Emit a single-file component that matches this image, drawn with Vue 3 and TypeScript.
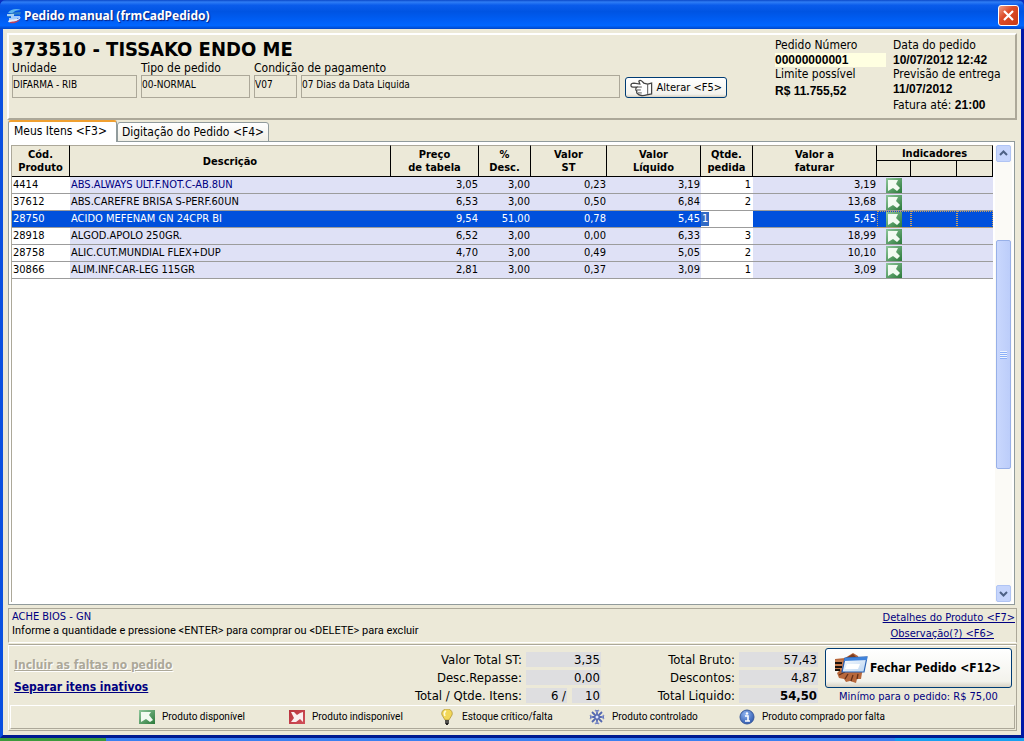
<script setup lang="ts">
import { ref } from 'vue'

interface Item {
  code: string
  name: string
  price: string
  discount: string
  st: string
  net: string
  qty: string
  total: string
  highlight?: boolean
}

const items: Item[] = [
  { code: '4414', name: 'ABS.ALWAYS ULT.F.NOT.C-AB.8UN', price: '3,05', discount: '3,00', st: '0,23', net: '3,19', qty: '1', total: '3,19', highlight: true },
  { code: '37612', name: 'ABS.CAREFRE BRISA S-PERF.60UN', price: '6,53', discount: '3,00', st: '0,50', net: '6,84', qty: '2', total: '13,68' },
  { code: '28750', name: 'ACIDO MEFENAM GN 24CPR BI', price: '9,54', discount: '51,00', st: '0,78', net: '5,45', qty: '1', total: '5,45' },
  { code: '28918', name: 'ALGOD.APOLO 250GR.', price: '6,52', discount: '3,00', st: '0,00', net: '6,33', qty: '3', total: '18,99' },
  { code: '28758', name: 'ALIC.CUT.MUNDIAL FLEX+DUP', price: '4,70', discount: '3,00', st: '0,49', net: '5,05', qty: '2', total: '10,10' },
  { code: '30866', name: 'ALIM.INF.CAR-LEG 115GR', price: '2,81', discount: '3,00', st: '0,37', net: '3,09', qty: '1', total: '3,09' },
]

const selected = ref(2)
const editedQty = ref('1')
</script>

<template>
  <div class="screen">
    <svg class="defs" width="0" height="0" aria-hidden="true">
      <defs>
        <linearGradient id="g-green" x1="0" y1="0" x2="1" y2="1">
          <stop offset="0" stop-color="#8fc79c" />
          <stop offset="1" stop-color="#2b7a3a" />
        </linearGradient>
        <linearGradient id="g-red" x1="0" y1="0" x2="1" y2="1">
          <stop offset="0" stop-color="#b8323c" />
          <stop offset="1" stop-color="#d0505a" />
        </linearGradient>
        <linearGradient id="g-card" x1="0" y1="0" x2="1" y2="1">
          <stop offset="0" stop-color="#ffffff" />
          <stop offset="1" stop-color="#b9d4f2" />
        </linearGradient>
        <radialGradient id="g-info" cx="0.4" cy="0.3" r="0.8">
          <stop offset="0" stop-color="#8fb4f0" />
          <stop offset="1" stop-color="#2450a8" />
        </radialGradient>
      </defs>
    </svg>

    <main class="window">
      <header class="titlebar">
        <svg class="app-icon" viewBox="0 0 16 16" aria-hidden="true">
          <path d="M2 5C4 1 11 0 15 2C11 2 8 3 7 5Z" fill="#5db4ee" />
          <path d="M1 9C2 5 8 4 15 4L14 7C10 6 7 7 6 9Z" fill="#2e7fc6" />
          <path d="M1 7H8M5 9H14M3 11H11" stroke="#d5efff" stroke-width="1.3" />
          <path d="M2 14C7 15 13 13 15 9C11 12 7 11 3 12Z" fill="#e8eef8" />
          <path d="M4 15C8 16 13 14 14 11C11 14 8 13 4 14Z" fill="#c0425a" />
        </svg>
        <h1>Pedido manual (frmCadPedido)</h1>
        <button class="close" type="button" aria-label="Fechar">
          <svg viewBox="0 0 19 19"><path d="M5 5L14 14M14 5L5 14" stroke="#fff" stroke-width="2.2" /></svg>
        </button>
      </header>

      <div class="client">
        <section class="order">
          <div class="customer">
            <h2>373510 - TISSAKO ENDO ME</h2>
            <div class="fields">
              <label class="unit">Unidade<input value="DIFARMA - RIB" readonly /></label>
              <label class="kind">Tipo de pedido<input value="00-NORMAL" readonly /></label>
              <div class="payment">
                <label for="pay-code">Condição de pagamento</label>
                <div class="pair">
                  <input id="pay-code" class="pay-code" value="V07" readonly />
                  <input value="07 Dias da Data Liquida" aria-label="Descrição da condição" readonly />
                </div>
              </div>
              <button class="xp alter" type="button">
                <svg viewBox="0 0 23 18" aria-hidden="true">
                  <path d="M1 6C1 4 3 4 4 4L10 5L9 2C11 0 13 3 14 4L18 5L22 4V15L17 16C14 17 9 17 8 15C6 14 7 12 7 12C5 11 6 9 7 8L3 8C1 8 1 7 1 6Z" fill="#fff" stroke="#444" stroke-width="1.3" />
                  <path d="M7 8H12M7 11H11M8 14H12M18 5V15" fill="none" stroke="#555" />
                </svg>
                <span>Alterar &lt;F5&gt;</span>
              </button>
            </div>
          </div>
          <dl class="number">
            <dt>Pedido Número</dt>
            <dd class="cream">00000000001</dd>
            <dt>Limite possível</dt>
            <dd class="low">R$ 11.755,52</dd>
          </dl>
          <dl class="dates">
            <dt>Data do pedido</dt>
            <dd>10/07/2012 12:42</dd>
            <dt>Previsão de entrega</dt>
            <dd>11/07/2012</dd>
            <dt class="until">Fatura até: <b>21:00</b></dt>
          </dl>
        </section>

        <nav class="tabs" role="tablist">
          <button class="tab active" type="button" role="tab" aria-selected="true">Meus Itens &lt;F3&gt;</button>
          <button class="tab" type="button" role="tab" aria-selected="false">Digitação do Pedido &lt;F4&gt;</button>
        </nav>

        <section class="page">
          <div class="grid-area">
            <table>
              <colgroup>
                <col class="c-code" /><col /><col class="c-price" /><col class="c-disc" /><col class="c-st" />
                <col class="c-net" /><col class="c-qty" /><col class="c-total" /><col class="c-i1" /><col class="c-i2" /><col class="c-i3" />
              </colgroup>
              <thead>
                <tr>
                  <th rowspan="2">Cód.<br />Produto</th>
                  <th rowspan="2">Descrição</th>
                  <th rowspan="2">Preço<br />de tabela</th>
                  <th rowspan="2">%<br />Desc.</th>
                  <th rowspan="2">Valor<br />ST</th>
                  <th rowspan="2">Valor<br />Líquido</th>
                  <th rowspan="2">Qtde.<br />pedida</th>
                  <th rowspan="2">Valor a<br />faturar</th>
                  <th colspan="3" class="group">Indicadores</th>
                </tr>
                <tr class="sub"><th></th><th></th><th></th></tr>
              </thead>
              <tbody>
                <tr v-for="(item, i) in items" :key="item.code" :class="{ selected: i === selected, highlight: item.highlight }" @click="selected = i">
                  <td class="white">{{ item.code }}</td>
                  <td class="name">{{ item.name }}</td>
                  <td class="num">{{ item.price }}</td>
                  <td class="num">{{ item.discount }}</td>
                  <td class="num">{{ item.st }}</td>
                  <td class="num">{{ item.net }}</td>
                  <td v-if="i === selected" class="edit"><input v-model="editedQty" aria-label="Quantidade pedida" /></td>
                  <td v-else class="num white qty">{{ item.qty }}</td>
                  <td class="num">{{ item.total }}</td>
                  <td class="ind">
                    <svg class="status" viewBox="0 0 16 15" aria-label="Produto disponível">
                      <rect width="16" height="15" fill="url(#g-green)" />
                      <path d="M2 2H12L10 6L14 10L11 13L7 10L2 13Z" fill="#f2fbf2" />
                    </svg>
                  </td>
                  <td class="ind"></td>
                  <td class="ind"></td>
                </tr>
              </tbody>
            </table>
          </div>
          <div class="scrollbar">
            <button type="button" aria-label="Rolar para cima"><svg viewBox="0 0 13 15"><path d="M3 9L6.500 5.500L10 9" /></svg></button>
            <div class="track">
              <i class="before"></i>
              <div class="thumb"><span></span></div>
              <i class="after"></i>
            </div>
            <button type="button" aria-label="Rolar para baixo"><svg viewBox="0 0 13 15"><path d="M3 6L6.500 9.500L10 6" /></svg></button>
          </div>
        </section>

        <section class="info">
          <div>
            <p class="maker">ACHE BIOS - GN</p>
            <p class="hint">Informe a quantidade e pressione &lt;ENTER&gt; para comprar ou &lt;DELETE&gt; para excluir</p>
          </div>
          <div class="info-links">
            <a href="#">Detalhes do Produto &lt;F7&gt;</a>
            <a href="#" class="obs">Observação(?) &lt;F6&gt;</a>
          </div>
        </section>

        <footer class="bottom">
          <div class="summary">
            <div class="actions">
              <a href="#" class="disabled" aria-disabled="true">Incluir as faltas no pedido</a>
              <a href="#">Separar itens inativos</a>
            </div>
            <dl class="totals left">
              <dt>Valor Total ST:</dt><dd>3,35</dd>
              <dt>Desc.Repasse:</dt><dd>0,00</dd>
              <dt>Total / Qtde. Itens:</dt><dd class="split"><span class="count">6 /</span><span>10</span></dd>
            </dl>
            <dl class="totals right">
              <dt>Total Bruto:</dt><dd>57,43</dd>
              <dt>Descontos:</dt><dd>4,87</dd>
              <dt>Total Liquido:</dt><dd class="strong">54,50</dd>
            </dl>
            <div class="finish">
              <button class="xp" type="button">
                <svg viewBox="0 0 34 32" aria-hidden="true">
                  <path d="M1 7L11 6L19 1L24 4L25 8L22 18L30 17L28 21L27 27L23 27L22 31L16 29L12 30L10 27L5 26L3 21L6 18L1 18Z" fill="#b8683c" />
                  <path d="M1 8H9V18H1Z" fill="#c47a4c" />
                  <path d="M1 11H8M1 15H8M1 18H6" stroke="#18100c" stroke-width="2" />
                  <path d="M12 6L19 2L23 6" fill="#7b3c20" />
                  <path d="M5 23L11 20M11 27L14 22M17 29L19 23M23 27L24 22" stroke="#63301a" stroke-width="1.3" />
                  <path d="M11 6L33 5L30 20L8 20Z" fill="url(#g-card)" stroke="#2862b4" stroke-width="1.2" />
                  <path d="M11 6L33 5V8L10 9Z" fill="#3f83dc" />
                  <path d="M13 12H26L24 17H11Z" fill="#fff" />
                </svg>
                <span>Fechar Pedido &lt;F12&gt;</span>
              </button>
              <p>Minímo para o pedido: R$ 75,00</p>
            </div>
          </div>
          <ul class="legend">
            <li>
              <svg viewBox="0 0 16 14" aria-hidden="true"><rect width="16" height="14" fill="url(#g-green)" /><path d="M2 2H12L10 5L14 10L11 12L7 9L2 12Z" fill="#f2fbf2" /></svg>
              Produto disponível
            </li>
            <li>
              <svg viewBox="0 0 16 14" aria-hidden="true"><rect width="16" height="14" fill="url(#g-red)" /><path d="M2 2L5 2L8 5L11 3L14 2V12L11 9L7 12L2 12L5 8Z" fill="#fbeef0" /></svg>
              Produto indisponível
            </li>
            <li>
              <svg viewBox="0 0 16 16" aria-hidden="true"><path d="M8 0C4 0 2 3 3 6L6 11H10L13 6C14 3 12 0 8 0Z" fill="#f2d758" stroke="#a98d2e" stroke-width=".7" /><path d="M7 2C5 3 5 5 6 7" fill="none" stroke="#fffbd8" stroke-width="1.6" /><path d="M6 12H10M6 14H10M7 15.500H9" stroke="#222" stroke-width="1.4" /></svg>
              Estoque crítico/falta
            </li>
            <li>
              <svg viewBox="0 0 16 16" aria-hidden="true"><path d="M8 1V15M1 8H15M3 3L13 13M13 3L3 13" stroke="#5468b0" stroke-width="1.8" /><path d="M6 1L8 3L10 1M6 15L8 13L10 15M1 6L3 8L1 10M15 6L13 8L15 10" fill="none" stroke="#8290c8" stroke-width="1.4" /><circle cx="8" cy="8" r="1.500" fill="#dfe6ff" /></svg>
              Produto controlado
            </li>
            <li>
              <svg viewBox="0 0 16 16" aria-hidden="true"><circle cx="8" cy="8" r="7" fill="url(#g-info)" stroke="#3a5a9c" /><circle cx="8" cy="4.500" r="1.200" fill="#fff" /><path d="M6 7H9V12M6 12H11" fill="none" stroke="#fff" stroke-width="1.600" /></svg>
              Produto comprado por falta
            </li>
          </ul>
        </footer>
      </div>
    </main>
    <div class="taskbar"><i class="start"></i><i class="tray"></i></div>
  </div>
</template>

<style>
body {
  background: #ece9d8;
}
</style>

<style scoped>
.screen {
  display: flex;
  flex-direction: column;
  min-height: 100vh;
  font: 11px/14px "DejaVu Sans Condensed", "DejaVu Sans", sans-serif;
  color: #000;
  background: #0a2fc0;
}
.screen * {
  box-sizing: border-box;
}
.defs {
  position: absolute;
}
h1, h2, p, dl, dd, ul {
  margin: 0;
  padding: 0;
}
button, input {
  font: inherit;
  color: inherit;
  margin: 0;
}
a {
  color: #000080;
}
.window {
  flex: 1;
  display: flex;
  flex-direction: column;
  border: 0 solid #0a50e0;
  border-width: 0 3px 3px;
  border-right-color: #0018a8;
  border-bottom-color: #001a90;
  border-radius: 6px 6px 0 0;
}
.titlebar {
  display: flex;
  align-items: center;
  height: 29px;
  margin: 0 -3px;
  padding: 2px 5px 0 6px;
  border-radius: 6px 6px 0 0;
  background: linear-gradient(#0a48c8, #2f7df5 7%, #0a5ceb 18%, #0054e3 40%, #0060f8 75%, #0066ff 88%, #0046c8);
}
.app-icon {
  width: 16px;
  height: 16px;
}
h1 {
  flex: 1;
  margin-left: 2px;
  font: bold 12px/16px "Noto Sans", sans-serif;
  color: #fff;
  text-shadow: 1px 1px 1px #0a1f80;
}
.close {
  width: 21px;
  height: 21px;
  padding: 0;
  border: 1px solid #fff;
  border-radius: 3px;
  background: linear-gradient(135deg, #f0a088, #dc4c28 40%, #c83a14);
}
.close svg {
  display: block;
}
.client {
  flex: 1;
  display: flex;
  flex-direction: column;
  padding: 4px;
  background: #ece9d8;
}
.order {
  display: flex;
  min-height: 87px;
  padding: 3px 2px 3px 3px;
  border: 2px solid #fff;
  border-right-color: #aca899;
  border-bottom-color: #aca899;
}
.customer {
  flex: 1;
}
h2 {
  margin-left: -1px;
  font: bold 20px/23px "DejaVu Sans Condensed", sans-serif;
}
.fields {
  display: flex;
  align-items: flex-end;
  gap: 4px;
  margin-right: 48px;
  font-size: 12px;
}
.fields input {
  display: block;
  width: 100%;
  height: 23px;
  padding: 0 0 5px;
  border: 1px solid #aca899;
  background: #ece9d8;
  font-size: 10px;
}
.unit {
  width: 125px;
}
.kind {
  width: 109px;
}
.payment {
  flex: 1;
}
.payment label {
  display: block;
}
.pair {
  display: flex;
  gap: 4px;
}
.pair .pay-code {
  width: 43px;
  flex: none;
}
.xp {
  display: flex;
  align-items: center;
  border: 1px solid #003c74;
  border-radius: 3px;
  background: linear-gradient(#fff, #f3f2ec 85%, #d8d2c4);
}
.alter {
  width: 102px;
  height: 21px;
  margin-left: 1px;
  padding: 0 4px;
  gap: 4px;
  font-size: 11px;
}
.alter svg {
  width: 23px;
  height: 18px;
}
.alter span {
  white-space: nowrap;
}
.number, .dates {
  font-size: 12px;
  line-height: 15px;
}
.number {
  width: 118px;
}
.dates {
  width: 120px;
}
dd, .dates b {
  font: bold 12px/14px "Liberation Sans", Arial, sans-serif;
}
.number .cream {
  width: 111px;
  background: #ffffe1;
}
.number .low {
  margin-top: 2px;
}
.dates .until {
  margin-top: 2px;
}
.tabs {
  display: flex;
  align-items: flex-end;
  margin-bottom: -1px;
  height: 22px;
  padding-left: 1px;
}
.tab {
  height: 20px;
  padding: 0 3px;
  border: 1px solid #919b9c;
  border-radius: 3px 3px 0 0;
  background: linear-gradient(#fff, #f0efe6);
  font-size: 12px;
  width: 152px;
  white-space: nowrap;
}
.tab.active {
  width: 109px;
  height: 22px;
  padding: 0 5px 2px;
  border-top: 2px solid #f0a030;
  border-bottom: 0;
  background: #fff;
  text-align: left;
  z-index: 1;
}
.page {
  flex: 1;
  display: flex;
  gap: 2px;
  margin: 0 2px 3px 1px;
  padding: 3px 2px 2px;
  border: 1px solid #919b9c;
  background: #fff;
}
.grid-area {
  flex: 1;
  border-left: 1px solid #aca899;
}
table {
  width: 100%;
  table-layout: fixed;
  border-collapse: separate;
  border-spacing: 0;
}
.c-code { width: 58px; }
.c-price { width: 88px; }
.c-disc { width: 52px; }
.c-st { width: 76px; }
.c-net { width: 94px; }
.c-qty { width: 52px; }
.c-total { width: 124px; }
.c-i1 { width: 34px; }
.c-i2 { width: 46px; }
.c-i3 { width: 36px; }
th {
  height: 16px;
  padding: 0;
  border-right: 1px solid #000;
  border-bottom: 1px solid #000;
  background: #ece9d8;
  font-weight: bold;
  line-height: 13px;
}
thead tr:first-child th {
  border-top: 1px solid #aca899;
}
td {
  height: 17px;
  padding: 0 1px;
  border-bottom: 1px solid #9c9c9c;
  background: #dfe1f6;
  line-height: 16px;
  white-space: nowrap;
}
td.white {
  background: #fff;
}
.num {
  text-align: right;
}
.qty {
  padding-right: 2px;
}
.highlight .name {
  color: #000080;
}
.selected td {
  background: #0050dc;
  color: #fff;
}
.selected td.edit {
  padding: 0;
  background: #fff;
}
.edit input {
  display: block;
  width: 100%;
  height: 16px;
  padding: 0 1px;
  border: 0;
  outline: 0;
  background: linear-gradient(#316ac5, #316ac5) no-repeat 0 1px / 8px 14px #fff;
  color: #fff;
}
.ind {
  padding: 0 9px;
}
.selected .ind {
  outline: 1px dotted #c8a060;
  outline-offset: -1px;
}
.status {
  display: block;
  width: 16px;
  height: 15px;
}
.scrollbar {
  display: flex;
  flex-direction: column;
  width: 17px;
  padding: 0 1px;
  background: #fbfaf6;
}
.scrollbar button {
  width: 15px;
  height: 17px;
  padding: 0;
  border: 1px solid #b0c4f4;
  border-radius: 2px;
  background: #c6d5fc;
}
.scrollbar svg {
  display: block;
}
.scrollbar path {
  fill: none;
  stroke: #4d6185;
  stroke-width: 2;
}
.track {
  flex: 1;
  display: flex;
  flex-direction: column;
}
.before { flex: 78; }
.after { flex: 116; }
.thumb {
  flex: 228;
  display: flex;
  align-items: center;
  justify-content: center;
  border: 1px solid #98b0e8;
  border-radius: 2px;
  background: linear-gradient(90deg, #c9d7fd, #bccdfa);
}
.thumb span {
  width: 7px;
  height: 8px;
  background: repeating-linear-gradient(#eef4fe 0 1px, #8cb0f8 1px 2px);
}
.info {
  display: flex;
  justify-content: space-between;
  min-height: 35px;
  margin-left: 1px;
  padding: 1px 1px 0 3px;
  border: 1px solid #aca899;
  border-bottom-color: #fff;
}
.maker {
  color: #000080;
}
.hint {
  font-family: Roboto, sans-serif;
}
.info-links {
  display: flex;
  flex-direction: column;
  align-items: flex-end;
  line-height: 16px;
}
.obs {
  margin-right: 21px;
}
.bottom {
  margin: 1px 0 0 1px;
  border: 1px solid #aca899;
  border-left-color: #fff;
  box-shadow: inset 0 1px #fff;
}
.summary {
  display: flex;
  padding: 3px 4px 0 5px;
  height: 60px;
}
.actions {
  flex: 1;
  display: flex;
  flex-direction: column;
  gap: 8px;
  padding-top: 10px;
  font-weight: bold;
  font-size: 12px;
}
.actions .disabled {
  color: #aca899;
  text-shadow: 1px 1px #fff;
}
.totals {
  display: grid;
  gap: 3px 4px;
  align-content: start;
  padding-top: 4px;
  font-size: 13px;
  line-height: 15px;
  text-align: right;
}
.totals dd {
  padding-right: 1px;
  background: #dedee0;
  font: 13px/15px "DejaVu Sans Condensed", sans-serif;
}
.totals.left {
  grid-template-columns: auto 75px;
}
.totals.right {
  grid-template-columns: 134px 79px;
  margin-right: 7px;
}
.totals .strong {
  font-weight: bold;
}
.totals .split {
  display: grid;
  grid-template-columns: 41px 29px;
  gap: 5px;
  padding: 0;
  background: none;
}
.split span {
  padding-right: 1px;
  background: #dedee0;
}
.finish {
  width: 187px;
  text-align: center;
  color: #000080;
}
.finish .xp {
  width: 100%;
  height: 40px;
  padding: 0 8px;
  gap: 2px;
  color: #000;
  font-size: 12px;
  font-weight: bold;
}
.finish svg {
  width: 34px;
  height: 32px;
  flex: none;
}
.finish span {
  white-space: nowrap;
}
.finish p {
  margin-top: 2px;
}
.legend {
  display: flex;
  align-items: center;
  height: 24px;
  margin: 0 1px 1px;
  padding-left: 128px;
  border: 1px solid #fff;
  border-right-color: #aca899;
  border-bottom-color: #aca899;
  list-style: none;
  font-family: Roboto, sans-serif;
  font-size: 10px;
}
.legend li {
  display: flex;
  align-items: center;
  gap: 7px;
  width: 150px;
  white-space: nowrap;
}
.legend li:last-child {
  width: auto;
}
.legend svg {
  width: 16px;
  height: 16px;
}
.taskbar {
  display: flex;
  justify-content: space-between;
  height: 3px;
  background: #3a80f0;
}
.start {
  width: 106px;
  background: #3c9a3c;
}
.tray {
  width: 129px;
  background: #18a0f0;
}
</style>
